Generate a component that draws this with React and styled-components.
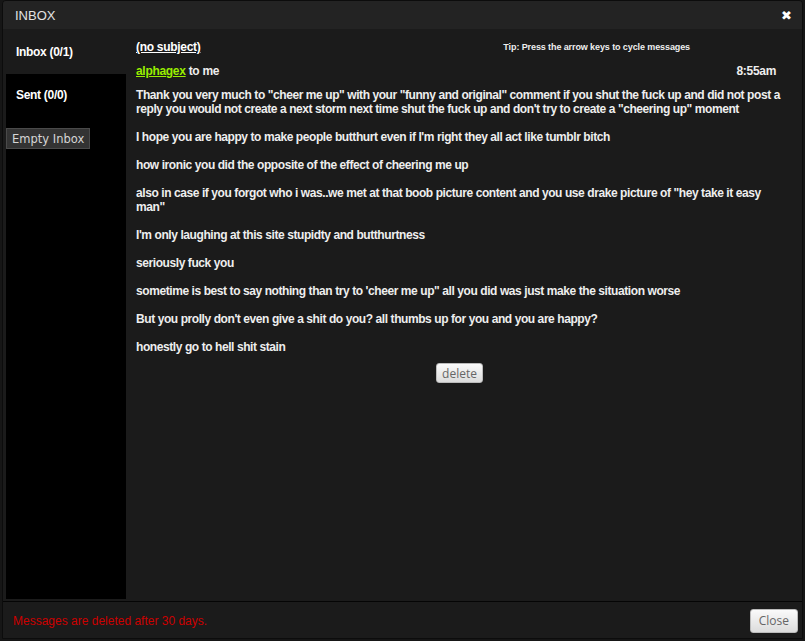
import React from 'react'
import styled, { createGlobalStyle } from 'styled-components'

const Global = createGlobalStyle`
  html, body { margin: 0; padding: 0; background: #161616; }
  body { font-family: "Liberation Sans", Arial, sans-serif; }
`

const Dialog = styled.div`
  width: 799px;
  height: 637px;
  margin-left: 2px;
  border: 1px solid #0c0c0c;
  border-radius: 4px 4px 0 0;
  background: #1b1b1b;
  display: flex;
  flex-direction: column;
  overflow: hidden;
`

const TitleBar = styled.div`
  height: 28px;
  flex: none;
  background: #232323;
  display: flex;
  align-items: center;
  justify-content: space-between;
  padding: 0 10px 0 12px;
  color: #e2e2e2;
  font-size: 13px;
`

const CloseX = styled.span`
  color: #fff;
  font-size: 13px;
  font-family: "DejaVu Sans", sans-serif;
  font-weight: bold;
`

const Main = styled.div`
  flex: 1;
  display: flex;
  padding: 0 3px 2px 3px;
  min-height: 0;
`

const Sidebar = styled.div`
  width: 120px;
  flex: none;
  background: #000;
  display: flex;
  flex-direction: column;
`

const NavItem = styled.div`
  height: ${p => (p.$active ? 45 : 42)}px;
  display: flex;
  align-items: center;
  padding-left: 10px;
  background: ${p => (p.$active ? '#1b1b1b' : '#000')};
  color: #fff;
  font-weight: bold;
  font-size: 12px;
  letter-spacing: -0.3px;
`

const EmptyBtn = styled.button`
  align-self: flex-start;
  margin-top: 12px;
  height: 21px;
  padding: 0 5px;
  background: #333;
  border: 1px solid #4a4a4a;
  color: #d6d6d6;
  font-family: "DejaVu Sans", sans-serif;
  font-size: 11.5px;
`

const Content = styled.div`
  flex: 1;
  padding: 11px 16px 0 10px;
  color: #eee;
  font-size: 12px;
  font-weight: bold;
  letter-spacing: -0.42px;
`

const HeadRow = styled.div`
  display: flex;
  justify-content: space-between;
  align-items: center;
  height: 14px;
`

const Subject = styled.span`
  text-decoration: underline;
  color: #fff;
  letter-spacing: -0.3px;
`

const Tip = styled.span`
  font-size: 9px;
  margin-right: 93px;
  color: #eee;
  letter-spacing: -0.1px;
`

const SenderRow = styled.div`
  display: flex;
  justify-content: space-between;
  margin-top: 10px;
  padding-right: 7px;
  line-height: 14px;
  letter-spacing: -0.3px;
`

const Sender = styled.span`
  color: #99ee00;
  text-decoration: underline;
`

const Body = styled.div`
  margin-top: 10px;
  line-height: 14px;
  p { margin: 0 0 14px 0; }
`

const Center = styled.div`
  display: flex;
  justify-content: center;
  margin-top: -5px;
  letter-spacing: 0;
`

const LightBtn = styled.button`
  height: ${p => p.$h}px;
  padding: 0 ${p => p.$px}px;
  border: 1px solid #bbb;
  border-radius: 3px;
  background: linear-gradient(#fafafa, #dcdcdc);
  color: #666;
  font-family: "Open Sans", "DejaVu Sans", sans-serif;
  font-size: 12px;
`

const Footer = styled.div`
  height: 35px;
  flex: none;
  border-top: 1px solid #050505;
  display: flex;
  align-items: center;
  justify-content: space-between;
  padding: 1px 4px 0 10px;
`

const Note = styled.span`
  color: #cc0000;
  font-size: 12px;
`

const paragraphs = [
  'Thank you very much to "cheer me up" with your "funny and original" comment if you shut the fuck up and did not post a reply you would not create a next storm next time shut the fuck up and don\'t try to create a "cheering up" moment',
  "I hope you are happy to make people butthurt even if I'm right they all act like tumblr bitch",
  'how ironic you did the opposite of the effect of cheering me up',
  'also in case if you forgot who i was..we met at that boob picture content and you use drake picture of "hey take it easy man"',
  "I'm only laughing at this site stupidty and butthurtness",
  'seriously fuck you',
  "sometime is best to say nothing than try to 'cheer me up\" all you did was just make the situation worse",
  "But you prolly don't even give a shit do you? all thumbs up for you and you are happy?",
  'honestly go to hell shit stain',
]

export default function App() {
  return (
    <>
      <Global />
      <Dialog>
        <TitleBar>
          <span>INBOX</span>
          <CloseX>✖</CloseX>
        </TitleBar>
        <Main>
          <Sidebar>
            <NavItem $active>Inbox (0/1)</NavItem>
            <NavItem>Sent (0/0)</NavItem>
            <EmptyBtn>Empty Inbox</EmptyBtn>
          </Sidebar>
          <Content>
            <HeadRow>
              <Subject>(no subject)</Subject>
              <Tip>Tip: Press the arrow keys to cycle messages</Tip>
            </HeadRow>
            <SenderRow>
              <span><Sender>alphagex</Sender> to me</span>
              <span>8:55am</span>
            </SenderRow>
            <Body>
              {paragraphs.map((t, i) => <p key={i}>{t}</p>)}
            </Body>
            <Center>
              <LightBtn $h={20} $px={5}>delete</LightBtn>
            </Center>
          </Content>
        </Main>
        <Footer>
          <Note>Messages are deleted after 30 days.</Note>
          <LightBtn $h={24} $px={8}>Close</LightBtn>
        </Footer>
      </Dialog>
    </>
  )
}
